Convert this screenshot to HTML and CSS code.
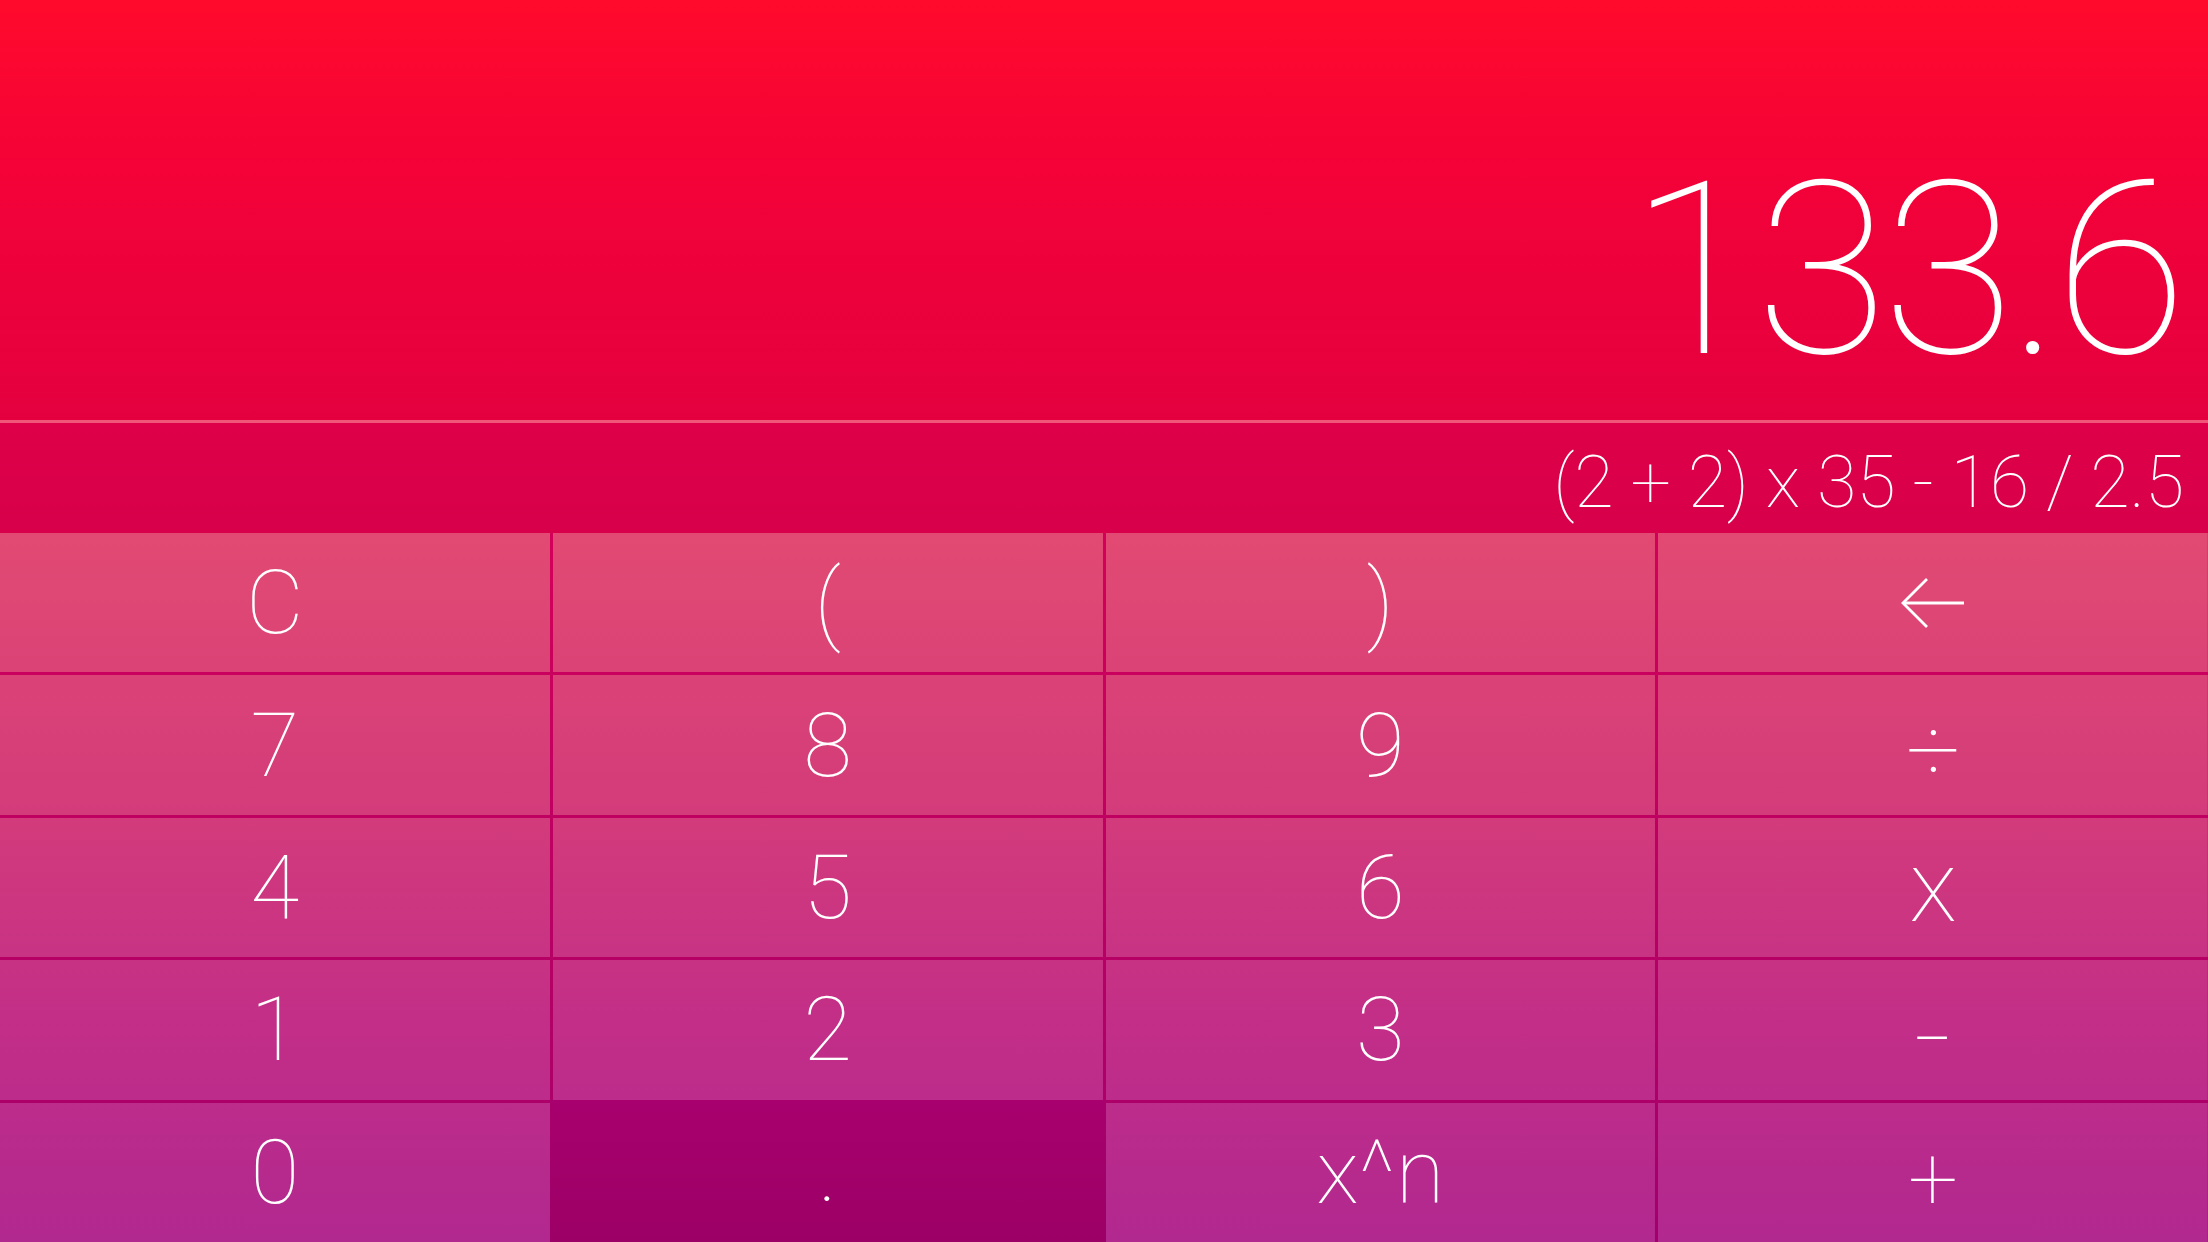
FILE: index.html
```html
<!DOCTYPE html>
<html lang="en">
<head>
<meta charset="utf-8">
<title>Calculator</title>
<link rel="stylesheet" href="styles.css">
</head>
<body>
<div class="calc">
  <div class="display">
    <div class="result">133.6</div>
  </div>
  <div class="divider"></div>
  <div class="expression">
    <div class="expr-text">(2 + 2) x 35 - 16 / 2.5</div>
  </div>
  <div class="keypad">
    <div class="key">C</div>
    <div class="key">(</div>
    <div class="key">)</div>
    <div class="key"><svg class="back-icon" width="66" height="54" viewBox="0 0 66 54"><polyline points="27,3 3,27 27,51" fill="none" stroke="#fff" stroke-width="2.8"/><line x1="3" y1="27" x2="64" y2="27" stroke="#fff" stroke-width="2.8"/></svg></div>
    <div class="key">7</div>
    <div class="key">8</div>
    <div class="key">9</div>
    <div class="key"><span class="op-div">÷</span></div>
    <div class="key">4</div>
    <div class="key">5</div>
    <div class="key">6</div>
    <div class="key op-x">x</div>
    <div class="key">1</div>
    <div class="key">2</div>
    <div class="key">3</div>
    <div class="key"><span class="op-minus">-</span></div>
    <div class="key">0</div>
    <div class="key key-active">.</div>
    <div class="key">x^n</div>
    <div class="key"><span class="op-plus">+</span></div>
  </div>
</div>
</body>
</html>
```
FILE: styles.css
```css
html, body {
  margin: 0;
  padding: 0;
}
body {
  width: 2208px;
  height: 1242px;
  overflow: hidden;
  font-family: Roboto, "Liberation Sans", sans-serif;
  font-weight: 100;
  color: #ffffff;
}
.calc {
  display: flex;
  flex-direction: column;
  height: 1242px;
}
.display {
  height: 420px;
  background: linear-gradient(to bottom, #ff0a2c 0%, #f40238 40%, #e4003f 100%);
  display: flex;
  justify-content: flex-end;
  align-items: flex-start;
  padding: 149px 27px 0 0;
  box-sizing: border-box;
}
.result {
  font-size: 242px;
  line-height: 1;
  letter-spacing: -6px;
}
.divider {
  height: 3px;
  background: #f0557a;
}
.expression {
  height: 110px;
  background: linear-gradient(to bottom, #de0048, #d8004b);
  display: flex;
  justify-content: flex-end;
  align-items: flex-start;
  padding: 24px 24px 0 0;
  box-sizing: border-box;
}
.expr-text {
  font-size: 72px;
  line-height: 1;
  letter-spacing: -0.2px;
  white-space: pre;
}
.keypad {
  flex: 1;
  display: grid;
  grid-template-columns: repeat(4, 1fr);
  grid-template-rows: repeat(5, 1fr);
  gap: 3px;
  background: linear-gradient(to bottom, #d3005a, #a3006c);
}
.key {
  display: flex;
  align-items: center;
  justify-content: center;
  font-size: 89px;
  line-height: 1;
  background: linear-gradient(to bottom, #e24a73 533px, #d43c7a 800px, #c22e88 1030px, #b1288f 1242px) fixed;
}
.op-x {
  font-size: 100px;
}
.op-div {
  display: inline-block;
  font-size: 96px;
  transform: translateY(6px);
}
.op-minus {
  display: inline-block;
  font-size: 92px;
  transform: translateY(7px) scaleX(1.4);
}
.op-plus {
  display: inline-block;
  transform: translateY(6px);
}
.key-active {
  background: linear-gradient(to bottom, #a8006e, #9c0066);
  margin: -3px -3px 0 -3px;
}
.back-icon {
  display: block;
}
```
